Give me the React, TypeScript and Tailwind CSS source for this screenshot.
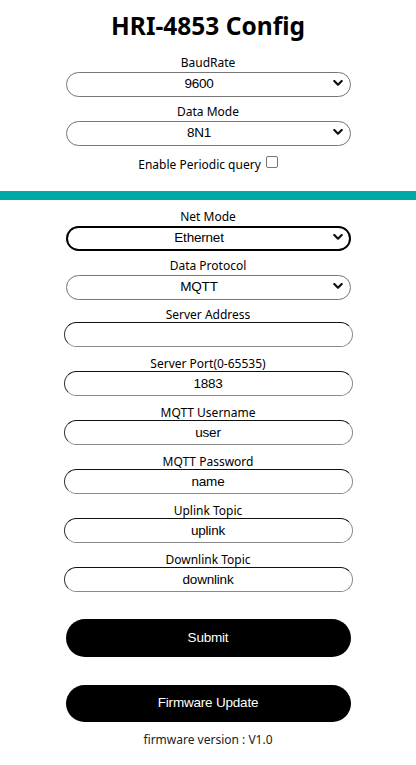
import React from "react";

const labelCls =
  "block text-center text-[12px] leading-[15px] pt-[9px] text-black [font-family:'Noto_Sans',sans-serif]";
const valueFont = "[font-family:'Liberation_Sans',Arial,sans-serif] text-[13.5px] tracking-[-0.2px]";

function Chevron() {
  return (
    <svg
      className="pointer-events-none absolute right-[8px] top-1/2 -translate-y-1/2"
      width="10"
      height="7"
      viewBox="0 0 10 7"
      fill="none"
    >
      <path d="M1.3 1.5 L5 5.2 L8.7 1.5" stroke="#111" strokeWidth="2.2" strokeLinecap="round" strokeLinejoin="round" />
    </svg>
  );
}

function SelectField({ label, value, focused }: { label: string; value: string; focused?: boolean }) {
  return (
    <div className="w-[285px]">
      <label className={labelCls}>{label}</label>
      <div className="relative h-[25px]">
        <select
          defaultValue={value}
          className={`appearance-none w-full h-[25px] rounded-full bg-white text-center [text-align-last:center] pr-[18px] pl-0 text-black outline-none ${valueFont} ${
            focused ? "border-2 border-black" : "border border-[#767676]"
          }`}
        >
          <option value={value}>{value}</option>
        </select>
        <Chevron />
      </div>
    </div>
  );
}

function InputField({ label, value }: { label: string; value: string }) {
  return (
    <div className="w-[289px]">
      <label className={labelCls}>{label}</label>
      <input
        defaultValue={value}
        className={`block w-full h-[25px] rounded-full bg-white text-center text-black outline-none border border-t-[#111] border-l-[#333] border-r-[#8a8a8a] border-b-[#8a8a8a] ${valueFont}`}
      />
    </div>
  );
}

export default function App() {
  return (
    <div className="w-[416px] min-h-[765px] bg-white flex flex-col items-center">
      <h1 className="mt-[11px] h-[33px] text-[24.5px] leading-[30px] font-bold text-black text-center [font-family:'Noto_Sans',sans-serif]">
        HRI-4853 Config
      </h1>
      <div className="mt-[2px] flex flex-col items-center">
        <SelectField label="BaudRate" value="9600" />
        <SelectField label="Data Mode" value="8N1" />
      </div>
      <div className="pt-[12px] h-[47px] text-[12px] leading-[16px] text-black [font-family:'Noto_Sans',sans-serif]">
        Enable Periodic query
        <input
          type="checkbox"
          className="appearance-none inline-block ml-[5px] align-[1px] w-[12px] h-[12px] border border-[#767676] rounded-[2px] bg-white"
        />
      </div>
      <div className="w-full h-[9px] bg-[#00a9a6]" />
      <div className="flex flex-col items-center">
        <SelectField label="Net Mode" value="Ethernet" focused />
        <SelectField label="Data Protocol" value="MQTT" />
        <InputField label="Server Address" value="" />
        <InputField label="Server Port(0-65535)" value="1883" />
        <InputField label="MQTT Username" value="user" />
        <InputField label="MQTT Password" value="name" />
        <InputField label="Uplink Topic" value="uplink" />
        <InputField label="Downlink Topic" value="downlink" />
      </div>
      <button className={`mt-[27px] w-[285px] h-[38px] rounded-full bg-black text-white ${valueFont}`}>
        Submit
      </button>
      <button className={`mt-[28px] w-[285px] h-[37px] rounded-full bg-black text-white ${valueFont}`}>
        Firmware Update
      </button>
      <div className="mt-[10px] text-[12px] leading-[16px] text-[#222] [font-family:'Noto_Sans',sans-serif]">
        firmware version : V1.0
      </div>
    </div>
  );
}
